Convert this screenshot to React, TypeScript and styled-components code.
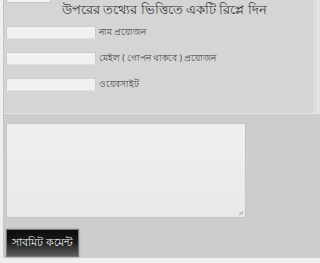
import React from 'react'
import styled, { createGlobalStyle } from 'styled-components'

const GlobalStyle = createGlobalStyle`
  html, body {
    margin: 0;
    padding: 0;
    background: #efefef;
    overflow: hidden;
  }
  body {
    font-family: "Noto Sans", "Liberation Sans", sans-serif;
    color: #333333;
  }
`

const Page = styled.div`
  width: 320px;
  height: 263px;
  padding-left: 3px;
  box-sizing: border-box;
  overflow: hidden;
`
const Panel = styled.div`
  width: 317px;
  height: 258px;
  border-left: 1px solid #c4c4c4;
  box-sizing: border-box;
  background: #cdcdcd;
  display: flex;
  flex-direction: column;
`
const InfoSection = styled.div`
  height: 114px;
  box-sizing: border-box;
  background: #d5d5d5;
  border-bottom: 1px solid #e6e6de;
  padding: 0 0 0 2px;
  box-shadow: inset -4px 0 0 #e2e2e2, inset -5px 0 0 #d5d5d5, inset -6px 0 0 #e4e4e4;
`
const CutInput = styled.div`
  width: 45px;
  height: 13px;
  margin-top: -10px;
  background: #f2f2f2;
  border: 1px solid #c8c8c8;
  box-sizing: border-box;
`
const Heading = styled.h3`
  margin: -2px 0 0 56px;
  font-size: 12.8px;
  line-height: 16px;
  font-weight: normal;
  color: #333333;
`
const Rows = styled.div`
  display: flex;
  flex-direction: column;
  gap: 13px;
  margin-top: 9px;
`
const Row = styled.div`
  display: flex;
  align-items: center;
  gap: 3px;
  height: 13px;
`
const Field = styled.div`
  width: 90px;
  height: 13px;
  background: #f1f1f1;
  border: 1px solid #cccccc;
  border-bottom-color: #e0e0e0;
  box-sizing: border-box;
`
const Label = styled.span`
  font-size: 8.5px;
  color: #444444;
  white-space: nowrap;
`
const CommentSection = styled.div`
  padding: 9px 0 0 2px;
  display: flex;
  flex-direction: column;
  gap: 11px;
`
const TextArea = styled.div`
  position: relative;
  width: 240px;
  height: 95px;
  background: linear-gradient(#efefef, #e9e9e9);
  border: 1px solid #c4c4c4;
  box-sizing: border-box;
`
const Grip = styled.svg`
  position: absolute;
  right: 1px;
  bottom: 1px;
`
const Submit = styled.button`
  width: 73px;
  height: 28px;
  padding: 0;
  border: 1px solid #777777;
  background: linear-gradient(#0c0c0c 0%, #1a1a1a 45%, #5e5e5e 100%);
  color: #f4f4f4;
  font-family: "Noto Sans", "Liberation Sans", sans-serif;
  font-size: 11px;
  box-shadow: 0 0 2px rgba(0, 0, 0, 0.3);
`

const fields = ['নাম প্রয়োজন', 'মেইল ( গোপন থাকবে ) প্রয়োজন', 'ওয়েবসাইট']

const App = () => (
  <Page>
    <GlobalStyle />
    <Panel>
      <InfoSection>
        <CutInput />
        <Heading>উপরের তথ্যের ভিত্তিতে একটি রিপ্লে দিন</Heading>
        <Rows>
          {fields.map((label, index) =>
            <Row key={`field_${index}`}>
              <Field />
              <Label>{label}</Label>
            </Row>
          )}
        </Rows>
      </InfoSection>
      <CommentSection>
        <TextArea>
          <Grip width="6" height="6" viewBox="0 0 6 6">
            <path d="M5 1 L1 5 M5 3 L3 5" stroke="#999" strokeWidth="0.8" />
          </Grip>
        </TextArea>
        <Submit>সাবমিট কমেন্ট</Submit>
      </CommentSection>
    </Panel>
  </Page>
)

export default App
